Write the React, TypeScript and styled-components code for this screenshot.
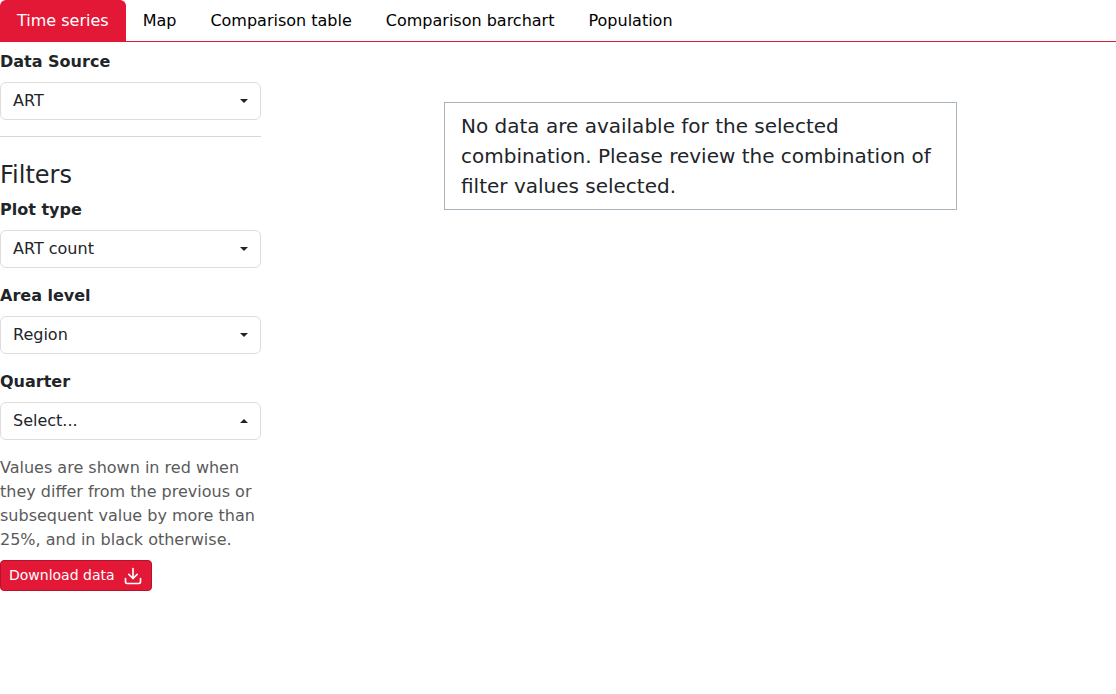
import React, { useState } from "react";
import styled, { createGlobalStyle } from "styled-components";

const GlobalStyle = createGlobalStyle`
  *, *::before, *::after { box-sizing: border-box; }
  body {
    margin: 0;
    background: #fff;
    color: #212529;
    font-family: "DejaVu Sans", sans-serif;
    font-size: 16px;
    line-height: 24px;
    overflow-x: hidden;
  }
`;

const TabBar = styled.nav`
  display: flex;
  flex-wrap: wrap;
  border-bottom: 1px solid #e31837;
`;

const Tab = styled.button<{ $active: boolean }>`
  border: 1px solid ${(p) => (p.$active ? "#e31837" : "transparent")};
  border-bottom: 0;
  border-radius: 6px 6px 0 0;
  padding: 8px 16px;
  background: ${(p) => (p.$active ? "#e31837" : "transparent")};
  color: ${(p) => (p.$active ? "#fff" : "#000")};
  font: inherit;
  cursor: pointer;
`;

const Row = styled.div`
  display: grid;
  grid-template-columns: 1fr 3fr;
  margin: 8px -12px 0;
`;

const Sidebar = styled.aside`
  min-width: 0;
  padding: 0 12px;
`;

const Content = styled.main`
  min-width: 0;
  padding-top: 52px;
`;

const Message = styled.p`
  width: 60%;
  margin: 0 auto;
  padding: 8px 16px;
  border: 1px solid #a9b4bd;
  font-size: 20px;
  line-height: 30px;
`;

const Field = styled.div`
  margin-bottom: 16px;
`;

const Label = styled.label`
  display: block;
  margin-bottom: 8px;
  font-weight: 700;
`;

const SelectBox = styled.div`
  position: relative;
`;

const Select = styled.select`
  display: block;
  width: 100%;
  height: 38px;
  padding: 6px 32px 6px 12px;
  border: 1px solid #dddddd;
  border-radius: 6px;
  background: #fff;
  color: inherit;
  font: inherit;
  appearance: none;
`;

const Caret = styled.svg`
  position: absolute;
  top: 17px;
  right: 13px;
  width: 8px;
  height: 4px;
  fill: #212529;
  pointer-events: none;
`;

const Divider = styled.hr`
  height: 1px;
  margin: 0 0 24px;
  border: 0;
  background: #d6d7d8;
`;

const Heading = styled.h3`
  margin: 0 0 8px;
  font-size: 24px;
  font-weight: 400;
  line-height: 29px;
`;

const Note = styled.p`
  margin: 0 0 8px;
  color: #5a5a5a;
`;

const DownloadButton = styled.button`
  display: flex;
  align-items: center;
  gap: 8px;
  height: 31px;
  padding: 4px 8px;
  border: 1px solid #b5132c;
  border-radius: 4px;
  background: #e31837;
  color: #fff;
  font: inherit;
  font-size: 14px;
  line-height: 21px;
  white-space: nowrap;
  cursor: pointer;
`;

const DownloadGlyph = styled.svg`
  width: 20px;
  height: 20px;
  margin-top: 1px;
  fill: none;
  stroke: currentColor;
  stroke-width: 2;
  stroke-linecap: round;
  stroke-linejoin: round;
`;

type FilterProps = { id: string; label: string; options: string[]; open?: boolean };

function Filter({ id, label, options, open = false }: FilterProps) {
  return (
    <Field>
      <Label htmlFor={id}>{label}</Label>
      <SelectBox>
        <Select id={id}>
          {options.map((o) => (
            <option key={o}>{o}</option>
          ))}
        </Select>
        <Caret viewBox="0 0 8 4" aria-hidden="true">
          <path d={open ? "M0 4 4 0 8 4z" : "M0 0H8L4 4z"} />
        </Caret>
      </SelectBox>
    </Field>
  );
}

const tabs = ["Time series", "Map", "Comparison table", "Comparison barchart", "Population"];

export default function App() {
  const [active, setActive] = useState(tabs[0]);
  return (
    <>
      <GlobalStyle />
      <TabBar>
        {tabs.map((t) => (
          <Tab key={t} type="button" $active={t === active} onClick={() => setActive(t)}>
            {t}
          </Tab>
        ))}
      </TabBar>
      <Row>
        <Sidebar>
          <Filter id="source" label="Data Source" options={["ART"]} />
          <Divider />
          <Heading>Filters</Heading>
          <Filter id="plot" label="Plot type" options={["ART count"]} />
          <Filter id="area" label="Area level" options={["Region"]} />
          <Filter id="quarter" label="Quarter" options={["Select..."]} open />
          <Note>
            Values are shown in red when they differ from the previous or subsequent value by more
            than 25%, and in black otherwise.
          </Note>
          <DownloadButton type="button">
            Download data
            <DownloadGlyph viewBox="0 0 24 24" aria-hidden="true">
              <path d="M21 15v4a2 2 0 0 1-2 2H5a2 2 0 0 1-2-2v-4" />
              <path d="M7 10l5 5 5-5" />
              <path d="M12 15V3" />
            </DownloadGlyph>
          </DownloadButton>
        </Sidebar>
        <Content>
          <Message>
            No data are available for the selected combination. Please review the combination of
            filter values selected.
          </Message>
        </Content>
      </Row>
    </>
  );
}
